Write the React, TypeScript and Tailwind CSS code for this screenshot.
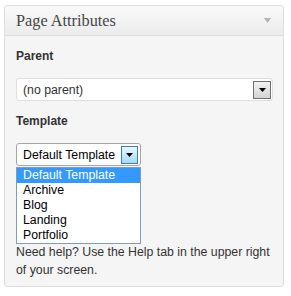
import React from "react";

const TEMPLATES = ["Default Template", "Archive", "Blog", "Landing", "Portfolio"];

function Caret({ className }: { className?: string }) {
  return (
    <svg width="7" height="4" viewBox="0 0 7 4" className={className}>
      <polygon points="0,0 7,0 3.5,4" fill="#000" />
    </svg>
  );
}

export default function App() {
  return (
    <div className="bg-white w-[291px] h-[296px] pt-[5px] pl-[4px] font-['Liberation_Sans',Arial,sans-serif]">
      <div className="w-[280px] border border-[#dfdfdf] rounded-[3px] bg-[#f5f5f5]">
        {/* Header */}
        <div className="h-[30px] flex items-center justify-between pl-[11px] pr-[12px] border-b border-[#dfdfdf] rounded-t-[3px] bg-gradient-to-b from-[#f9f9f9] to-[#ececec]">
          <h3 className="font-['Liberation_Serif',Georgia,serif] text-[16.3px] leading-[20px] text-[#464646] pt-[1px]">
            Page Attributes
          </h3>
          <svg width="7" height="5" viewBox="0 0 7 5">
            <polygon points="0,0 7,0 3.5,5" fill="#b5b5b5" />
          </svg>
        </div>

        {/* Body */}
        <div className="px-[11px] pb-[7px] text-[12.3px] text-[#333]">
          <p className="mt-[12px] font-bold text-[12px] leading-[16px]">Parent</p>
          <div className="mt-[14px] h-[23px] w-[257px] flex items-center justify-between bg-white border border-[#dfdfdf] rounded-[3px] pl-[6px] pr-[1px]">
            <span className="leading-[16px]">(no parent)</span>
            <span className="w-[18px] h-[18px] flex items-center justify-center border border-[#707070] bg-gradient-to-b from-[#f2f2f2] to-[#d4d4d4]">
              <Caret />
            </span>
          </div>

          <p className="mt-[12px] font-bold text-[12px] leading-[16px]">Template</p>
          <div className="relative mt-[14px] w-[125px]">
            <div className="h-[23px] flex items-center justify-between bg-white border border-[#a5a5a5] rounded-[3px] pl-[6px] pr-[2px] text-black">
              <span className="leading-[16px]">Default Template</span>
              <span className="w-[17px] h-[18px] flex items-center justify-center border border-[#3c7fb1] bg-gradient-to-b from-[#eaf6fd] to-[#a7d9f5]">
                <Caret />
              </span>
            </div>
            {/* Open dropdown list */}
            <ul className="absolute z-10 left-0 top-full mt-[1px] w-[125px] bg-white border border-[#7f9db9] text-black">
              {TEMPLATES.map((t, i) => (
                <li
                  key={t}
                  className={`h-[15px] leading-[15px] pl-[6px] ${i === 0 ? "bg-[#3399ff] text-white" : ""}`}
                >
                  {t}
                </li>
              ))}
            </ul>
          </div>

          <p className="mt-[77px] leading-[18px]">
            Need help? Use the Help tab in the upper right of your screen.
          </p>
        </div>
      </div>
    </div>
  );
}
